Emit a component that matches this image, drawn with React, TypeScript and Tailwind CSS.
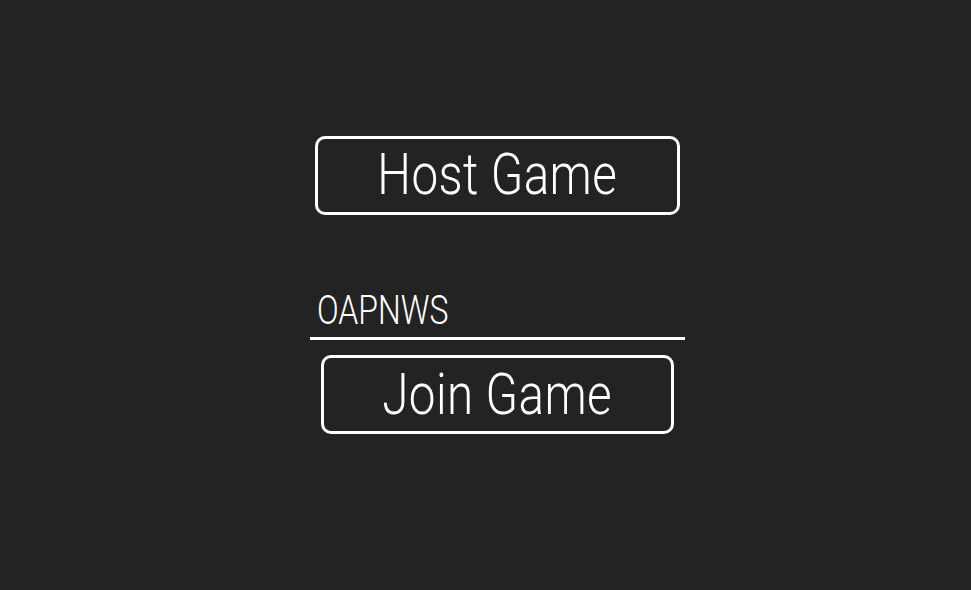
import React from "react";

export default function App() {
  const font = { fontFamily: "Roboto, 'Liberation Sans', sans-serif" };
  return (
    <div className="w-full h-[590px] bg-[#232323] flex justify-center pl-[23px] pt-[136px]" style={font}>
      <div className="w-[375px] flex flex-col items-center">
        <button className="w-[365px] h-[79px] border-[3px] border-white rounded-[10px] flex items-center justify-center pb-[3px] text-white">
          <span className="inline-block text-[58px] font-light leading-none scale-x-[0.82] tracking-[0.5px]">Host Game</span>
        </button>
        <div className="mt-[77px] w-[375px] h-[48px] border-b-[3px] border-white flex items-center pl-[7px] pb-[9px]">
          <span className="inline-block text-[41px] font-light leading-none text-white origin-left scale-x-[0.78]">OAPNWS</span>
        </div>
        <button className="mt-[15px] w-[353px] h-[79px] border-[3px] border-white rounded-[10px] flex items-center justify-center pb-[2px] text-white">
          <span className="inline-block text-[58px] font-light leading-none scale-x-[0.82] tracking-[0.5px]">Join Game</span>
        </button>
      </div>
    </div>
  );
}
